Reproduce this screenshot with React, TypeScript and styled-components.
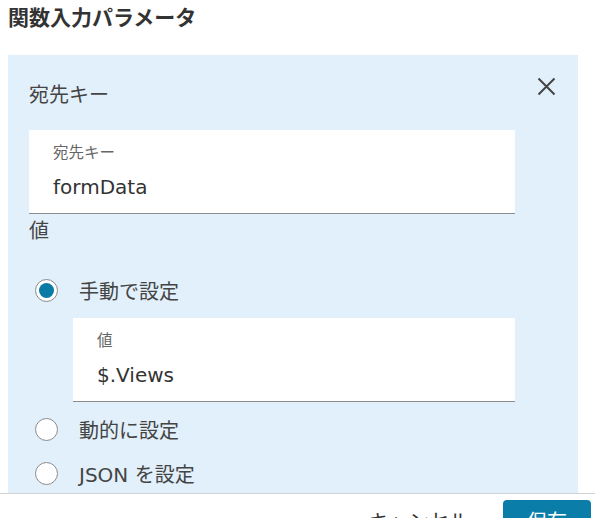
import React from "react";
import styled, { createGlobalStyle } from "styled-components";

const Global = createGlobalStyle`
  html, body { margin: 0; padding: 0; background: #fff; }
  body { font-family: "DejaVu Sans", "Noto Sans CJK JP", sans-serif; color: #333; }
  *, *::before, *::after { box-sizing: border-box; }
`;

const Dialog = styled.div`
  width: 595px;
  display: flex;
  flex-direction: column;
`;

const Header = styled.header`
  padding: 4px 8px 0 8px;
  height: 37px;
`;

const Title = styled.h1`
  margin: 0;
  font-size: 21px;
  line-height: 29px;
  font-weight: bold;
  color: #333;
`;

const Scroll = styled.div`
  height: 456px;
  overflow: hidden;
  padding: 18px 17px 0 8px;
`;

const Panel = styled.section`
  background: #e2f0fb;
  display: grid;
  grid-template-columns: 1fr 63px;
  padding: 26px 0 40px 21px;
`;

const PanelTitle = styled.div`
  font-size: 20px;
  line-height: 28px;
  color: #444;
`;

const CloseButton = styled.button`
  justify-self: center;
  align-self: start;
  margin-top: -4px;
  width: 19px;
  height: 19px;
  padding: 0;
  border: none;
  background: transparent;
  display: flex;
  cursor: pointer;
`;

const Content = styled.div`
  grid-column: 1;
`;

const Field = styled.div<{ $top?: number }>`
  background: #fff;
  border-bottom: 1px solid #8c8c8c;
  padding: 13px 24px 12px 24px;
  margin-top: ${(p) => p.$top ?? 0}px;
  display: flex;
  flex-direction: column;
`;

const FieldLabel = styled.span`
  font-size: 15.5px;
  line-height: 20px;
  color: #666;
`;

const FieldValue = styled.span`
  font-size: 20px;
  line-height: 28px;
  color: #333;
  margin-top: 10px;
`;

const SectionLabel = styled.div`
  font-size: 20px;
  line-height: 28px;
  color: #444;
  margin-top: 3px;
`;

const RadioGroup = styled.div`
  margin-top: 23px;
  display: flex;
  flex-direction: column;
`;

const RadioRow = styled.label`
  height: 44px;
  display: flex;
  align-items: center;
  gap: 21px;
  padding-left: 6px;
  font-size: 20px;
  color: #444;
`;

const RadioCircle = styled.span<{ $checked?: boolean }>`
  width: 23px;
  height: 23px;
  border-radius: 50%;
  border: 1px solid #8a8a8a;
  background: #fff;
  display: flex;
  align-items: center;
  justify-content: center;
  flex: none;
  &::after {
    content: "";
    width: 15px;
    height: 15px;
    border-radius: 50%;
    background: ${(p) => (p.$checked ? "#0a7aa6" : "transparent")};
  }
`;

const Nested = styled.div`
  padding-left: 44px;
  margin: 6px 0 5px 0;
`;

const Footer = styled.footer`
  border-top: 1px solid #d2d2d2;
  background: #fff;
  display: flex;
  justify-content: flex-end;
  align-items: center;
  gap: 16px;
  padding: 6px 4px 12px 0;
`;

const TextButton = styled.button`
  border: none;
  background: transparent;
  font-family: inherit;
  font-size: 20px;
  color: #333;
  height: 40px;
  padding: 0 18px;
`;

const PrimaryButton = styled.button`
  border: none;
  border-radius: 4px;
  background: #0a7ea8;
  color: #fff;
  font-family: inherit;
  font-size: 20px;
  height: 40px;
  width: 88px;
`;

const CloseIcon = () => (
  <svg width="19" height="19" viewBox="0 0 19 19">
    <path d="M1.5 1.5 L17.5 17.5 M17.5 1.5 L1.5 17.5" stroke="#444" strokeWidth="2" fill="none" />
  </svg>
);

export default function App() {
  return (
    <>
      <Global />
      <Dialog>
        <Header>
          <Title>関数入力パラメータ</Title>
        </Header>
        <Scroll>
          <Panel>
            <PanelTitle>宛先キー</PanelTitle>
            <CloseButton aria-label="閉じる">
              <CloseIcon />
            </CloseButton>
            <Content>
              <Field $top={21}>
                <FieldLabel>宛先キー</FieldLabel>
                <FieldValue>formData</FieldValue>
              </Field>
              <SectionLabel>値</SectionLabel>
              <RadioGroup>
                <RadioRow>
                  <RadioCircle $checked />
                  手動で設定
                </RadioRow>
                <Nested>
                  <Field>
                    <FieldLabel>値</FieldLabel>
                    <FieldValue>$.Views</FieldValue>
                  </Field>
                </Nested>
                <RadioRow>
                  <RadioCircle />
                  動的に設定
                </RadioRow>
                <RadioRow>
                  <RadioCircle />
                  JSON を設定
                </RadioRow>
              </RadioGroup>
            </Content>
          </Panel>
        </Scroll>
        <Footer>
          <TextButton>キャンセル</TextButton>
          <PrimaryButton>保存</PrimaryButton>
        </Footer>
      </Dialog>
    </>
  );
}
